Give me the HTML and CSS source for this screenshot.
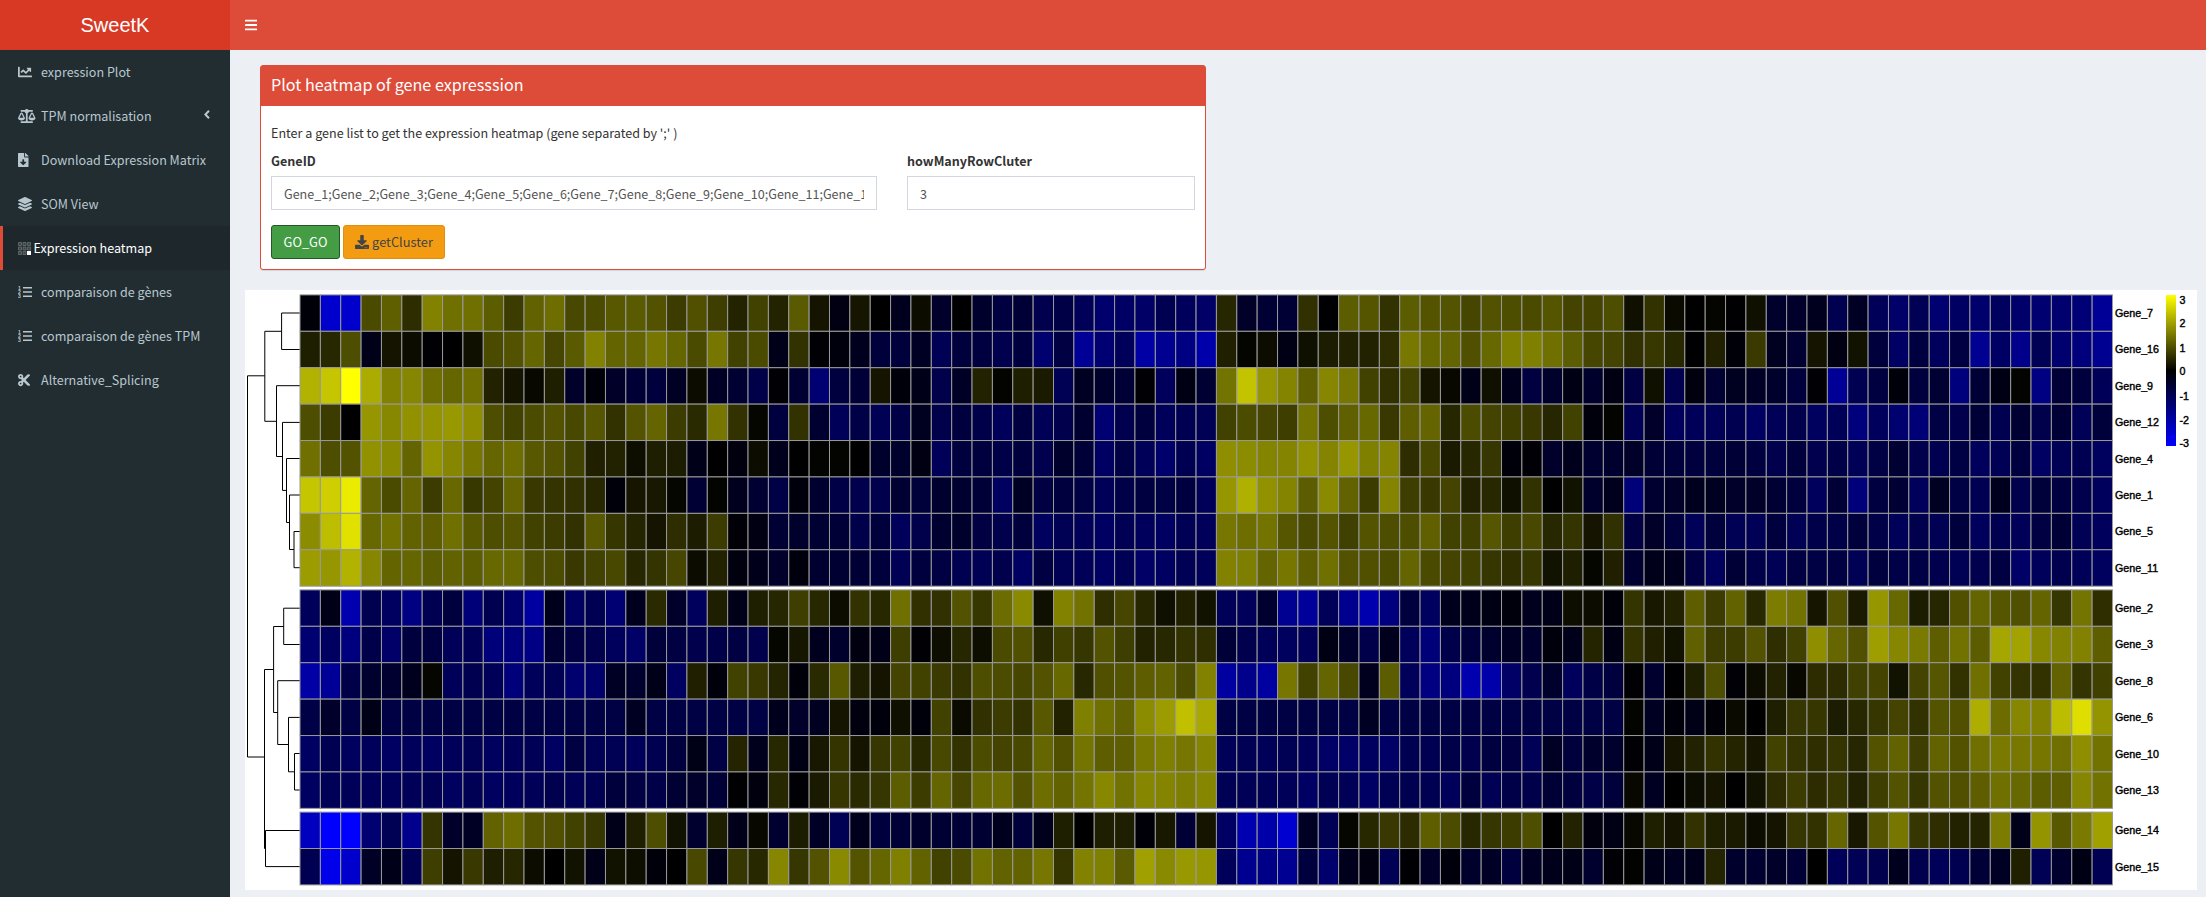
FILE: index.html
```html
<!DOCTYPE html>
<html lang="en">
<head>
<meta charset="utf-8">
<title>SweetK</title>
<link rel="stylesheet" href="styles.css">
</head>
<body>
<div class="app">
  <aside class="sidebar">
    <div class="logo">SweetK</div>
    <ul class="menu">
      <li class="item"><svg class="icon" width="14" height="14" viewBox="0 0 512 512"><path d="M496 384H64V80c0-8.84-7.16-16-16-16H16C7.16 64 0 71.16 0 80v336c0 17.67 14.33 32 32 32h464c8.84 0 16-7.16 16-16v-32c0-8.84-7.16-16-16-16zM464 96H345.94c-21.38 0-32.09 25.85-16.97 40.97l32.4 32.4L288 242.75l-73.37-73.37c-12.5-12.5-32.76-12.5-45.25 0l-68.69 68.69c-6.25 6.25-6.25 16.38 0 22.63l22.62 22.62c6.25 6.25 16.38 6.25 22.63 0L192 237.25l73.37 73.37c12.5 12.5 32.76 12.5 45.25 0l96-96 32.4 32.4c15.12 15.12 40.97 4.41 40.97-16.97V112c.01-8.84-7.15-16-15.99-16z"/></svg><span>expression Plot</span></li>
      <li class="item"><svg class="icon" width="17.5" height="14" viewBox="0 0 640 512"><path d="M256 336h-.02c0-16.18 1.34-8.73-85.05-181.51-17.65-35.29-68.19-35.36-85.87 0C-2.06 328.75.02 320.33.02 336H0c0 44.18 57.31 80 128 80s128-35.82 128-80zM128 176l72 144H56l72-144zm511.98 160c0-16.18 1.34-8.73-85.05-181.51-17.65-35.29-68.19-35.36-85.87 0-87.12 174.26-85.04 165.84-85.04 181.51H384c0 44.18 57.31 80 128 80s128-35.82 128-80h-.02zM440 320l72-144 72 144H440zm88 128H352V153.25c23.51-10.29 41.16-31.48 46.39-57.25H528c8.84 0 16-7.16 16-16V48c0-8.84-7.16-16-16-16H383.64C369.04 12.68 346.09 0 320 0s-49.04 12.68-63.64 32H112c-8.84 0-16 7.16-16 16v32c0 8.84 7.16 16 16 16h129.61c5.23 25.76 22.87 46.96 46.39 57.25V448H112c-8.84 0-16 7.16-16 16v32c0 8.84 7.16 16 16 16h416c8.84 0 16-7.16 16-16v-32c0-8.84-7.16-16-16-16z"/></svg><span>TPM normalisation</span><svg class="chevron" width="6" height="9" viewBox="0 0 6 9"><path d="M5 .8 1.4 4.5 5 8.2"/></svg></li>
      <li class="item"><svg class="icon" width="10.5" height="14" viewBox="0 0 384 512"><path d="M224 136V0H24C10.7 0 0 10.7 0 24v464c0 13.3 10.7 24 24 24h336c13.3 0 24-10.7 24-24V160H248c-13.2 0-24-10.8-24-24zm76.45 211.36l-96.42 95.7c-6.65 6.61-17.39 6.61-24.04 0l-96.42-95.7C73.42 337.29 80.54 320 94.82 320H160v-80c0-8.84 7.16-16 16-16h32c8.84 0 16 7.16 16 16v80h65.18c14.28 0 21.4 17.29 11.27 27.36zM377 105L279.1 7c-4.5-4.5-10.6-7-17-7H256v128h128v-6.1c0-6.3-2.5-12.4-7-16.9z"/></svg><span>Download Expression Matrix</span></li>
      <li class="item"><svg class="icon" width="14" height="14" viewBox="0 0 512 512"><path d="M12.41 148.02l232.94 105.67c6.8 3.09 14.49 3.09 21.29 0l232.94-105.67c16.55-7.51 16.55-32.52 0-40.03L266.65 2.31a25.607 25.607 0 0 0-21.29 0L12.41 107.98c-16.55 7.51-16.55 32.53 0 40.04zm487.18 88.28l-58.09-26.33-161.64 73.27c-7.56 3.43-15.59 5.17-23.86 5.17s-16.29-1.74-23.86-5.17L70.51 209.97l-58.1 26.33c-16.55 7.5-16.55 32.5 0 40l232.94 105.59c6.8 3.08 14.49 3.08 21.29 0L499.59 276.3c16.55-7.5 16.55-32.5 0-40zm0 127.8l-57.87-26.23-161.86 73.37c-7.56 3.43-15.59 5.17-23.86 5.17s-16.29-1.74-23.86-5.17L70.29 337.87 12.41 364.1c-16.55 7.5-16.55 32.5 0 40l232.94 105.59c6.8 3.08 14.49 3.08 21.29 0L499.59 404.1c16.55-7.5 16.55-32.5 0-40z"/></svg><span>SOM View</span></li>
      <li class="item active"><svg class="icon grid-icon" width="13" height="13" viewBox="0 0 13 13"><path class="grid-lines" d="M.5 .5h3v3h-3zM5 .5h3v3h-3zM9.5 .5h3v3h-3zM.5 5h3v3h-3zM5 5h3v3h-3zM9.5 5h3v3h-3zM.5 9.5h3v3h-3zM5 9.5h3v3h-3z"/><rect x="9" y="9" width="4" height="4" fill="#fff"/></svg><span>Expression heatmap</span></li>
      <li class="item"><svg class="icon" width="14" height="14" viewBox="0 0 14 14"><path d="M5 2h9v1.5H5zM5 6.3h9v1.5H5zM5 10.6h9v1.5H5z"/><text class="digit" x="0" y="4.6">1</text><text class="digit" x="0" y="9">2</text><text class="digit" x="0" y="13.4">3</text></svg><span>comparaison de gènes</span></li>
      <li class="item"><svg class="icon" width="14" height="14" viewBox="0 0 14 14"><path d="M5 2h9v1.5H5zM5 6.3h9v1.5H5zM5 10.6h9v1.5H5z"/><text class="digit" x="0" y="4.6">1</text><text class="digit" x="0" y="9">2</text><text class="digit" x="0" y="13.4">3</text></svg><span>comparaison de gènes TPM</span></li>
      <li class="item"><svg class="icon" width="12.25" height="14" viewBox="0 0 448 512"><path d="M278.06 256L444.48 89.57c4.69-4.69 4.69-12.29 0-16.97-32.8-32.8-85.99-32.8-118.79 0L210.18 188.12l-24.86-24.86c4.31-10.92 6.68-22.81 6.68-35.26 0-53.02-42.98-96-96-96S0 74.98 0 128s42.98 96 96 96c4.54 0 8.99-.32 13.36-.93L142.29 256l-32.93 32.93c-4.37-.61-8.83-.93-13.36-.93-53.02 0-96 42.98-96 96s42.98 96 96 96 96-42.98 96-96c0-12.45-2.37-24.34-6.68-35.26l24.86-24.86L325.69 439.4c32.8 32.8 85.99 32.8 118.79 0 4.69-4.68 4.69-12.28 0-16.97L278.06 256zM96 160c-17.64 0-32-14.36-32-32s14.36-32 32-32 32 14.36 32 32-14.36 32-32 32zm0 256c-17.64 0-32-14.36-32-32s14.36-32 32-32 32 14.36 32 32-14.36 32-32 32z"/></svg><span>Alternative_Splicing</span></li>
    </ul>
  </aside>
  <div class="main">
    <header class="navbar">
      <svg width="12.25" height="14" viewBox="0 0 448 512" fill="#fff"><rect y="60" width="448" height="72" rx="16"/><rect y="220" width="448" height="72" rx="16"/><rect y="380" width="448" height="72" rx="16"/></svg>
    </header>
    <main class="content">
      <section class="box">
        <h3 class="box-title">Plot heatmap of gene expresssion</h3>
        <div class="box-body">
          <p class="hint">Enter a gene list to get the expression heatmap (gene separated by ';' )</p>
          <div class="fields">
            <div class="field wide"><label for="genes">GeneID</label><input id="genes" type="text" value="Gene_1;Gene_2;Gene_3;Gene_4;Gene_5;Gene_6;Gene_7;Gene_8;Gene_9;Gene_10;Gene_11;Gene_12;Gene_13;Gene_14;Gene_15;Gene_16"></div>
            <div class="field"><label for="clusters">howManyRowCluter</label><input id="clusters" type="text" value="3"></div>
          </div>
          <div class="buttons">
            <button class="btn go" type="button">GO_GO</button>
            <button class="btn get" type="button"><svg width="14" height="14" viewBox="0 0 512 512"><path d="M216 0h80c13.3 0 24 10.7 24 24v168h87.7c17.8 0 26.7 21.5 14.1 34.1L269.7 378.3c-7.5 7.5-19.8 7.5-27.3 0L90.1 226.1c-12.6-12.6-3.7-34.1 14.1-34.1H192V24c0-13.3 10.7-24 24-24zm296 376v112c0 13.3-10.7 24-24 24H24c-13.3 0-24-10.7-24-24V376c0-13.3 10.7-24 24-24h146.7l49 49c20.1 20.1 52.5 20.1 72.6 0l49-49H488c13.3 0 24 10.7 24 24zm-124 88c0-11-9-20-20-20s-20 9-20 20 9 20 20 20 20-9 20-20zm64 0c0-11-9-20-20-20s-20 9-20 20 9 20 20 20 20-9 20-20z"/></svg><span>getCluster</span></button>
          </div>
        </div>
      </section>
      <section class="plot">
        <svg id="heatmap" width="1952" height="600" viewBox="245 290 1952 600">
          <defs><linearGradient id="scale" x1="0" y1="0" x2="0" y2="1"><stop offset="0" stop-color="#ff0"/><stop offset=".5" stop-color="#000"/><stop offset="1" stop-color="#00f"/></linearGradient></defs>
          <path class="tree" d="M300 313H281.6V349.5H300M281.6 331.3H264.8V421.3H276.5M300 385.7H276.5V456.5H282.5M300 422.4H282.5V490.4H286.5M300 458.5H286.5V522.5H289.5M300 495H289.5V549.5H294M300 531.5H294V567.7H300M264.8 375.8H247.5V757H264.5M273.6 669.5H264.5V848.5H265.5M283.7 626.5H273.6V712.5H277.7M300 608.2H283.7V644.5H300M300 680.7H277.7V744.5H288.5M300 717.4H288.5V771.8H294.5M300 753.5H294.5V790H300M300 830.5H265.5V866.6H300"/>
          <g id="cells"></g>
          <g id="labels"></g>
          <rect x="2166" y="295" width="10" height="151" fill="url(#scale)"/>
          <g class="ticks"><text x="2179.5" y="304">3</text><text x="2179.5" y="327">2</text><text x="2179.5" y="351.5">1</text><text x="2179.5" y="375.3">0</text><text x="2179.5" y="399.5">-1</text><text x="2179.5" y="423.5">-2</text><text x="2179.5" y="446.5">-3</text></g>
        </svg>
      </section>
    </main>
  </div>
</div>
<script src="heatmap.js"></script>
</body>
</html>
```
FILE: styles.css
```css
* { box-sizing: border-box; }
body {
  margin: 0;
  background: #ecf0f5;
  color: #333;
  font-family: "Noto Sans CJK SC", "Noto Sans", sans-serif;
  font-size: 12.57px;
  line-height: 20px;
}
.app { display: flex; height: 897px; overflow: hidden; }
.sidebar { width: 230px; flex: none; background: #222d32; color: #b8c7ce; }
.logo {
  height: 50px;
  background: #d73925;
  color: #fff;
  font: 20px/50px "Liberation Sans", Arial, sans-serif;
  text-align: center;
}
.menu { list-style: none; margin: 0; padding: 0; }
.item {
  display: flex;
  align-items: center;
  height: 44px;
  padding: 0 20px 0 15px;
  border-left: 3px solid transparent;
  white-space: nowrap;
}
.item span { width: 171px; flex: none; }
.item .icon { flex: none; fill: currentColor; margin-right: calc(23px - var(--w, 14px)); }
.item:nth-child(2) { --w: 17.5px; }
.item:nth-child(3) { --w: 10.5px; }
.item:nth-child(5) { --w: 20.5px; }
.item:nth-child(8) { --w: 12.25px; }
.item:nth-child(2) span { width: 163px; }
.chevron { flex: none; fill: none; stroke: currentColor; stroke-width: 2; margin-top: -3px; }
.active { background: #1e282c; border-left-color: #dd4b39; color: #fff; }
.grid-icon .grid-lines { fill: #3a4347; stroke: #6b7275; stroke-width: .8; }
.digit { font: bold 5px "Liberation Sans", Arial, sans-serif; }
.main { flex: 1; min-width: 0; }
.navbar { display: flex; align-items: center; height: 50px; padding-left: 15px; background: #dd4b39; }
.content { padding: 15px 9px 0 15px; }
.box {
  width: 946px;
  height: 205px;
  margin: 0 0 20px 15px;
  background: #fff;
  border: 1px solid #dd4b39;
  border-radius: 3px;
  box-shadow: 0 1px 1px rgba(0, 0, 0, .1);
}
.box-title {
  margin: 0;
  height: 40px;
  padding: 0 10px;
  background: #dd4b39;
  color: #fff;
  font-size: 16.15px;
  font-weight: 400;
  line-height: 37px;
}
.box-body { padding: 17px 10px 0; }
.hint { margin: 0 0 8px; }
.fields { display: flex; gap: 30px; }
.field { display: flex; flex-direction: column; gap: 5px; flex: 1; }
.field.wide { flex: 0 0 606px; }
label { font-weight: 700; }
input {
  height: 34px;
  width: 100%;
  padding: 6px 12px;
  border: 1px solid #d2d6de;
  background: #fff;
  color: #555;
  font: inherit;
}
.buttons { display: flex; gap: 3px; margin-top: 15px; font-size: 12.8px; }
.btn {
  display: flex;
  align-items: center;
  justify-content: center;
  gap: 3px;
  height: 34px;
  padding: 0;
  border: 1px solid;
  border-radius: 3px;
  font: inherit;
}
.go { width: 69px; background: #449d44; border-color: #255625; color: #fff; }
.get { width: 102px; background: #f39c12; border-color: #e08e0b; color: #444; fill: #444; }
.plot { height: 600px; background: #fff; }
.plot svg { display: block; }
.tree { fill: none; stroke: #000; stroke-width: 1; }
#cells rect { stroke: #999; stroke-width: 1; }
#labels text, .ticks text {
  font: 10.7px "Liberation Sans", Arial, sans-serif;
  fill: #000;
  stroke: #000;
  stroke-width: .4;
}
```
FILE: heatmap.js
```js
// Expression level per sample: positive values are yellow, negative are blue.
const genes = [
["Gene_7", "-8 -205 -205 75 95 45 130 112 112 92 60 98 110 72 75 88 90 82 60 80 62 35 65 35 90 20 -18 22 0 -30 12 -42 0 -45 -65 -55 -78 -70 -88 -108 -100 -102 -82 -92 -102 38 -40 -52 -52 48 -3 92 85 50 92 84 84 70 82 78 75 85 68 68 78 16 50 10 0 5 -3 16 -45 -42 -30 -80 -36 -88 -104 -84 -112 -98 -108 -94 -106 -112 -110 -118 -150"],
["Gene_16", "30 40 78 -25 20 12 -5 0 16 75 82 102 70 90 130 100 100 118 102 75 118 65 75 -25 50 -5 -12 -30 -58 -60 -36 -85 -60 -65 -78 -65 -110 -66 -150 -115 -90 -165 -145 -130 -170 32 5 12 -20 16 28 34 34 45 120 104 100 80 104 128 128 112 92 70 68 48 55 40 -3 32 -8 58 -32 -50 20 -18 18 -60 -100 -65 -92 -66 -145 -100 -138 -84 -110 -125 -145"],
["Gene_9", "178 198 255 172 130 134 110 102 112 34 20 8 30 -42 -10 -40 -55 -60 -36 12 -38 -50 -72 -5 -50 -115 -62 -55 20 -10 -25 -75 -38 34 3 30 26 -85 -35 -45 -55 -5 -92 -20 -50 115 195 150 132 95 134 118 65 48 66 20 8 -25 16 -28 -65 -45 -20 -45 -18 -66 16 -78 -15 -50 -32 -38 -45 -60 -5 -150 -82 -65 -10 -62 -50 -125 -55 -20 3 -130 -55 -62 -88"],
["Gene_12", "78 60 0 150 135 146 148 152 142 78 66 76 82 72 86 50 84 100 60 42 118 50 6 -62 50 -48 -88 -70 -84 -70 -32 -75 -62 -72 -90 -65 -86 -76 -48 -115 -78 -62 -90 -82 -84 66 76 70 62 116 78 96 104 56 94 100 38 76 68 62 56 38 66 -12 3 -84 -42 -92 -88 -86 -80 -98 -86 -76 -94 -88 -125 -92 -110 -118 -68 -76 -54 -80 -50 -75 -55 -86 -58"],
["Gene_4", "112 78 82 146 138 100 148 134 118 102 110 88 82 66 32 34 14 30 28 -25 0 -15 12 -28 0 3 3 0 -45 -44 -18 -88 -62 -62 -72 -62 -78 -44 -56 -98 -70 -88 -108 -82 -98 142 140 132 132 146 132 150 128 132 45 72 26 40 54 -10 -6 -42 -28 -48 -46 -40 -55 -58 -62 -60 -55 -64 -76 -60 -78 -72 -86 -68 -50 -76 -80 -68 -92 -84 -64 -98 -84 -82 -94"],
["Gene_1", "198 206 235 100 75 100 60 104 55 68 100 56 52 48 38 -10 22 24 6 -52 3 -30 -50 -70 -12 -48 -70 -76 -76 -50 -58 -46 -48 -56 -96 -36 -66 -62 -68 -88 -72 -64 -68 -64 -88 150 176 146 132 92 138 98 60 132 62 56 68 34 40 16 50 0 18 -44 -28 -120 -48 -40 -30 -32 -42 -40 -52 -62 -92 -54 -122 -64 -52 -90 -34 -68 -82 -30 -76 -58 -64 -76 -92"],
["Gene_5", "140 190 225 104 114 98 94 112 88 78 84 66 60 50 88 54 36 20 45 28 60 -6 -18 -52 -44 -50 -54 -74 -60 -90 -75 -48 -44 -66 -76 -60 -94 -84 -88 -98 -84 -92 -98 -84 -90 118 110 115 86 74 84 64 84 78 78 96 66 64 86 62 72 40 52 20 48 -66 -40 -60 -88 -60 -84 -86 -62 -84 -74 -72 -60 -72 -88 -76 -84 -60 -92 -80 -88 -66 -54 -84 -92"],
["Gene_11", "156 150 178 134 100 102 92 98 92 104 104 78 76 56 66 72 38 52 70 12 34 -14 -26 -42 -12 -48 -50 -52 -60 -84 -62 -66 -80 -84 -76 -98 -66 -84 -88 -98 -84 -102 -98 -84 -90 130 126 100 118 94 112 82 80 76 100 74 68 64 54 46 54 18 30 6 32 -48 -26 -30 -66 -92 -54 -74 -84 -66 -68 -66 -84 -62 -72 -70 -76 -84 -78 -66 -102 -90 -78 -88 -94"],
["Gene_2", "-90 -22 -175 -80 -96 -130 -82 -62 -120 -80 -108 -160 -28 -98 -82 -115 -30 42 -42 -92 30 -24 30 38 62 40 12 50 40 112 48 48 82 54 108 138 16 130 114 46 70 38 16 32 18 -88 -90 -48 -145 -155 -88 -142 -175 -126 -62 -94 -28 -26 -20 -12 -30 -24 14 12 -10 52 24 34 94 60 98 40 124 114 22 80 26 150 104 28 38 80 100 86 80 100 54 116 46"],
["Gene_3", "-112 -96 -126 -74 -104 -62 -64 -88 -86 -122 -124 -132 -50 -66 -76 -92 -102 -58 -66 -76 -72 -66 -76 6 22 -30 -44 -16 -24 62 -5 14 38 14 75 80 40 64 54 82 62 34 40 50 46 -56 -78 -88 -94 -90 -20 -44 -74 -30 -90 -120 -74 -60 -46 -36 -46 -12 -26 36 -20 50 32 18 96 60 60 82 46 64 142 102 80 158 134 122 94 114 92 166 162 136 130 130 94"],
["Gene_8", "-165 -150 -72 -46 -48 -30 6 -88 -80 -88 -122 -90 -84 -110 -106 -36 -46 -24 -96 32 -12 66 56 36 -10 42 88 30 20 68 66 58 50 78 76 70 82 104 40 80 84 94 98 76 130 -160 -138 -160 118 66 100 72 -30 92 -90 -128 -126 -175 -170 -102 -78 -44 -92 -70 -62 -5 -46 -3 30 78 -6 12 34 8 44 44 64 68 18 68 86 50 112 66 52 50 98 52 64"],
["Gene_6", "-70 -42 -68 -22 -68 -68 -68 -68 -68 -68 -68 -68 -68 -68 -68 -68 -34 -68 -68 -68 -68 -68 -68 -28 -42 -32 20 -14 -12 16 -10 66 10 48 60 50 88 34 128 112 98 140 156 192 168 -68 -68 -68 -68 -68 -68 -68 -34 -68 -68 -68 -68 -68 -68 -68 -68 -68 -68 -68 -68 3 -34 -10 -22 -6 10 0 30 54 54 28 40 54 68 50 84 80 174 108 134 130 188 222 148"],
["Gene_10", "-98 -82 -94 -90 -98 -92 -98 -90 -84 -94 -88 -86 -98 -66 -84 -84 -90 -80 -62 -22 -68 36 -28 40 -20 24 52 20 54 66 40 72 50 76 68 72 102 80 116 94 94 120 128 118 132 -88 -84 -88 -84 -92 -102 -104 -96 -102 -82 -82 -72 -78 -64 -66 -86 -36 -60 -44 -44 -5 -24 20 34 50 36 22 66 52 46 52 38 82 98 62 98 82 112 122 120 118 112 142 114"],
["Gene_13", "-96 -86 -88 -90 -90 -88 -84 -94 -84 -96 -92 -88 -78 -86 -82 -60 -66 -72 -50 -42 -54 -3 -14 40 -5 26 54 42 54 92 60 100 70 104 108 82 110 98 116 136 114 134 132 126 134 -84 -86 -86 -88 -100 -84 -86 -100 -84 -80 -82 -90 -62 -84 -72 -74 -54 -62 -70 -58 8 -34 0 12 20 0 18 44 60 44 54 34 62 82 54 82 80 94 112 104 92 94 134 114"],
["Gene_14", "-190 -255 -255 -115 -84 -140 52 -42 -36 98 110 84 80 66 54 -24 30 78 18 -46 30 -26 8 -48 28 -38 -84 -28 -62 -54 -44 -52 -54 -50 -30 -58 -28 30 0 30 30 -8 24 -54 20 -100 -176 -168 -208 -36 -84 6 40 56 44 94 76 40 54 60 78 0 34 -14 -20 8 30 20 50 30 26 12 20 54 50 102 24 84 118 54 46 34 36 124 -24 148 88 122 160"],
["Gene_15", "-82 -235 -205 -38 -24 -84 62 20 56 30 38 12 0 18 -24 18 14 -10 0 72 -24 54 40 134 54 82 138 84 102 128 98 66 74 114 98 98 118 52 130 128 90 160 138 152 150 -90 -144 -134 -146 -62 -108 -28 -16 -84 -4 -40 -12 -44 -38 -62 -36 -26 -22 -46 -5 2 -24 -32 -26 36 -44 -48 -40 -54 0 -88 -84 -78 -30 -78 -88 -80 -54 -36 32 -84 -46 -20 -82"]
];

const left = 300, cellWidth = 20.365, cellHeight = 36.41;
const clusters = [[0, 8, 294.9], [8, 14, 589.9], [14, 16, 812.1]];
const ns = "http://www.w3.org/2000/svg";
const cells = document.getElementById("cells");
const labels = document.getElementById("labels");

function add(parent, tag, attrs) {
  const el = document.createElementNS(ns, tag);
  for (const key in attrs) el.setAttribute(key, attrs[key]);
  return parent.appendChild(el);
}

for (const [from, to, top] of clusters) {
  for (let r = from; r < to; r++) {
    const y = top + (r - from) * cellHeight;
    genes[r][1].split(" ").map(Number).forEach((v, c) => {
      add(cells, "rect", {
        x: (left + c * cellWidth).toFixed(2), y: y.toFixed(2),
        width: cellWidth, height: cellHeight,
        fill: v < 0 ? `rgb(0,0,${-v})` : `rgb(${v},${v},0)`
      });
    });
    add(labels, "text", { x: 2115, y: (y + 22).toFixed(1) }).textContent = genes[r][0];
  }
}
```
